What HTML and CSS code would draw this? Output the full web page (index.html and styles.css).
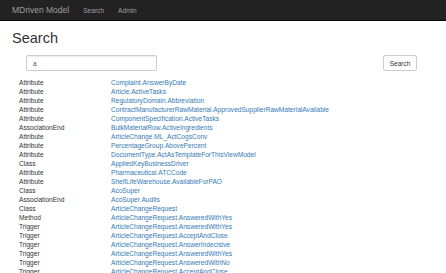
FILE: index.html
```html
<!DOCTYPE html>
<html lang="en">
<head>
  <meta charset="UTF-8">
  <title>MDriven Model - Search</title>
  <link rel="stylesheet" href="styles.css">
</head>
<body>

  <!-- Top Navigation -->
  <nav class="navbar">
    <a href="#" class="brand">MDriven Model</a>
    <a href="#" class="nav-link">Search</a>
    <a href="#" class="nav-link">Admin</a>
  </nav>

  <div class="page">
    <h1>Search</h1>

    <form class="search-form" onsubmit="return false;">
      <input type="text" class="search-input" value="a">
      <button type="submit" class="search-button">Search</button>
    </form>

    <div class="results" id="results"></div>
  </div>

  <script>
    const hits = [
      ['Attribute', 'Complaint.AnswerByDate'],
      ['Attribute', 'Article.ActiveTasks'],
      ['Attribute', 'RegulatoryDomain.Abbreviation'],
      ['Attribute', 'ContractManufacturerRawMaterial.ApprovedSupplierRawMaterialAvailable'],
      ['Attribute', 'ComponentSpecification.ActiveTasks'],
      ['AssociationEnd', 'BulkMaterialRow.ActiveIngredients'],
      ['Attribute', 'ArticleChange.ML_ActCogsConv'],
      ['Attribute', 'PercentageGroup.AbovePercent'],
      ['Attribute', 'DocumentType.ActAsTemplateForThisViewModel'],
      ['Class', 'AppliedKeyBusinessDriver'],
      ['Attribute', 'Pharmaceutical.ATCCode'],
      ['Attribute', 'ShelfLifeWarehouse.AvailableForPAO'],
      ['Class', 'AcoSuper'],
      ['AssociationEnd', 'AcoSuper.Audits'],
      ['Class', 'ArticleChangeRequest'],
      ['Method', 'ArticleChangeRequest.AnsweredWithYes'],
      ['Trigger', 'ArticleChangeRequest.AnsweredWithYes'],
      ['Trigger', 'ArticleChangeRequest.AcceptAndClose'],
      ['Trigger', 'ArticleChangeRequest.AnswerIndecisive'],
      ['Trigger', 'ArticleChangeRequest.AnsweredWithYes'],
      ['Trigger', 'ArticleChangeRequest.AnsweredWithNo'],
      ['Trigger', 'ArticleChangeRequest.AcceptAndClose']
    ];

    const results = document.getElementById('results');
    hits.forEach(hit => {
      const row = document.createElement('div');
      row.className = 'result-row';
      row.innerHTML = `
        <span class="kind">${hit[0]}</span>
        <a href="#" class="target">${hit[1]}</a>
      `;
      results.appendChild(row);
    });
  </script>
</body>
</html>
```

FILE: styles.css
```css
/* General Styles */
body {
  font-family: 'Liberation Sans', Arial, sans-serif;
  margin: 0;
  padding: 0;
  color: #333;
  background-color: #fff;
}

a {
  text-decoration: none;
}

/* Navbar */
.navbar {
  display: flex;
  align-items: center;
  height: 20px;
  padding-left: 12px;
  background-color: #222;
  border-bottom: 1px solid #080808;
}

.brand {
  font-size: 8.5px;
  color: #9d9d9d;
  margin-right: 14px;
}

.nav-link {
  font-size: 6.6px;
  color: #9d9d9d;
  margin-right: 14px;
}

/* Page */
.page {
  padding-left: 12px;
}

h1 {
  font-size: 14.5px;
  font-weight: normal;
  line-height: 16px;
  margin: 9px 0 0;
}

/* Search form */
.search-form {
  display: flex;
  justify-content: space-between;
  align-items: center;
  margin-top: 9px;
  padding-left: 14px;
  padding-right: 29px;
}

.search-input {
  width: 131px;
  height: 16px;
  box-sizing: border-box;
  padding: 0 6px;
  border: 1px solid #ccc;
  border-radius: 2px;
  font-family: inherit;
  font-size: 6.5px;
  color: #555;
  box-shadow: inset 0 1px 1px rgba(0, 0, 0, 0.075);
}

.search-button {
  width: 34px;
  height: 16px;
  padding: 0;
  background-color: #fff;
  border: 1px solid #ccc;
  border-radius: 2px;
  font-family: inherit;
  font-size: 6.5px;
  color: #333;
  cursor: pointer;
}

/* Results */
.results {
  margin-top: 7px;
  padding-left: 7px;
}

.result-row {
  display: grid;
  grid-template-columns: 92px auto;
  font-size: 6.6px;
  line-height: 9px;
}

.kind {
  color: #333;
}

.target {
  color: #337ab7;
}
```
